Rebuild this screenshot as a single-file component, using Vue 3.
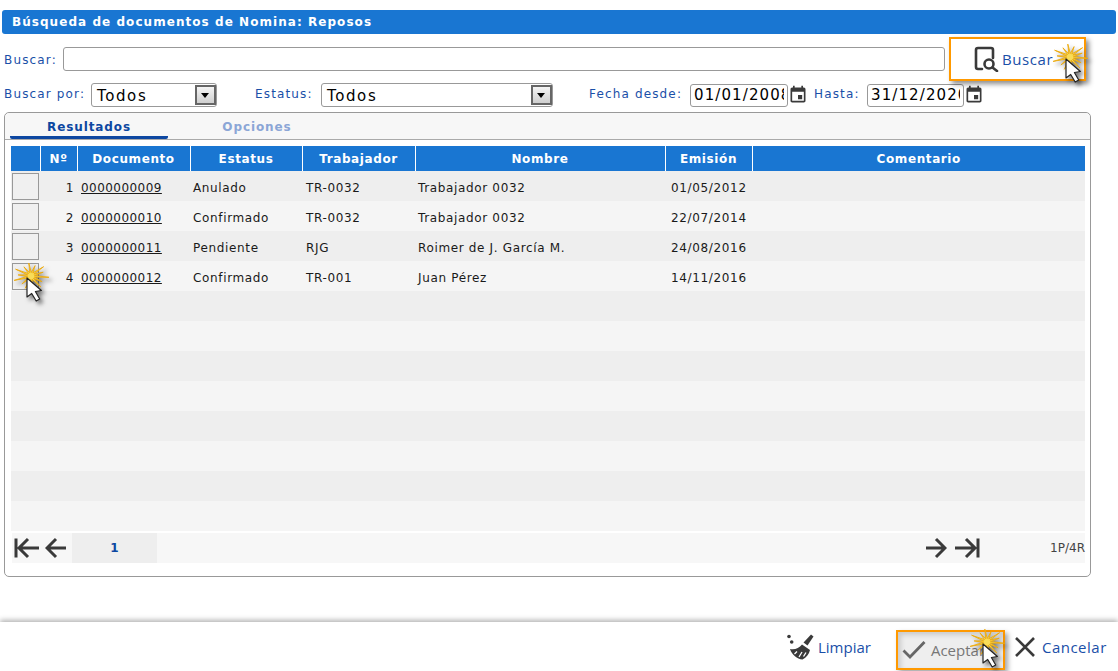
<script setup>
const columns = [
  { title: '', width: 29 },
  { title: 'Nº', width: 37 },
  { title: 'Documento', width: 113 },
  { title: 'Estatus', width: 112 },
  { title: 'Trabajador', width: 113 },
  { title: 'Nombre', width: 250 },
  { title: 'Emisión', width: 87 },
  { title: 'Comentario', width: 333 },
];

const docs = [
  { n: 1, doc: '0000000009', status: 'Anulado', worker: 'TR-0032', name: 'Trabajador 0032', date: '01/05/2012' },
  { n: 2, doc: '0000000010', status: 'Confirmado', worker: 'TR-0032', name: 'Trabajador 0032', date: '22/07/2014' },
  { n: 3, doc: '0000000011', status: 'Pendiente', worker: 'RJG', name: 'Roimer de J. García M.', date: '24/08/2016' },
  { n: 4, doc: '0000000012', status: 'Confirmado', worker: 'TR-001', name: 'Juan Pérez', date: '14/11/2016' },
];

const emptyRows = 8;

// spiky star: long rays sideways, shorter up and down
const burst = [];
for (let i = 0; i < 28; i++) {
  const a = (i / 28) * Math.PI * 2 + 0.1;
  const long = i % 2 === 0;
  const rx = long ? (i % 4 === 0 ? 18 : 13) : 3.5;
  const ry = long ? (i % 4 === 0 ? 13 : 11) : 3.5;
  burst.push((25 + Math.cos(a) * rx).toFixed(1) + ',' + (13 + Math.sin(a) * ry).toFixed(1));
}
const burstPoints = burst.join(' ');
</script>

<template>
  <div class="page">
    <svg class="defs" width="0" height="0">
      <symbol id="spark" viewBox="0 0 42 46" overflow="visible">
        <polygon :points="burstPoints" fill="#f8dc58" stroke="#eba90f" stroke-width="0.9" />
        <path d="M21 15v19l4.700-3.500 4.500 7.500 3.500-2-4.300-7.500 6-1z" fill="#fff" stroke="#222" stroke-width="1.200" stroke-linejoin="round" />
      </symbol>
    </svg>

    <div class="title">Búsqueda de documentos de Nomina: Reposos</div>

    <div class="filters">
      <div class="search-row">
        <label class="lbl lbl-search">Buscar:</label>
        <input class="text-input" type="text" />
        <button class="search-btn">
          <svg width="26" height="26" viewBox="0 0 26 26" fill="none" stroke="#3a3a3a" stroke-width="2.600">
            <path d="M9 23H5a2 2 0 0 1-2-2V4a2 2 0 0 1 2-2h13a2 2 0 0 1 2 2v8" stroke-linecap="round" />
            <circle cx="16" cy="18" r="4.500" />
            <path d="M19.500 21.500L24 25" stroke-linecap="round" />
          </svg>
          <span>Buscar</span>
          <svg class="spark spark-search"><use href="#spark" /></svg>
        </button>
      </div>

      <div class="options-row">
        <label class="lbl lbl-by">Buscar por:</label>
        <div class="select sel-by">
          <span>Todos</span>
          <i class="arrow"></i>
        </div>
        <label class="lbl lbl-status">Estatus:</label>
        <div class="select sel-status">
          <span>Todos</span>
          <i class="arrow"></i>
        </div>
        <label class="lbl lbl-from">Fecha desde:</label>
        <input class="date-input" type="text" value="01/01/2008" />
        <svg class="cal" width="20" height="20" viewBox="0 0 24 24" fill="#3a3a3a">
          <path d="M17 12h-5v5h5v-5zM16 1v2H8V1H6v2H5c-1.110 0-1.990.9-1.990 2L3 19c0 1.100.89 2 2 2h14c1.100 0 2-.9 2-2V5c0-1.100-.9-2-2-2h-1V1h-2zm3 18H5V8h14v11z" />
        </svg>
        <label class="lbl lbl-to">Hasta:</label>
        <input class="date-input date-to" type="text" value="31/12/2020" />
        <svg class="cal" width="20" height="20" viewBox="0 0 24 24" fill="#3a3a3a">
          <path d="M17 12h-5v5h5v-5zM16 1v2H8V1H6v2H5c-1.110 0-1.990.9-1.990 2L3 19c0 1.100.89 2 2 2h14c1.100 0 2-.9 2-2V5c0-1.100-.9-2-2-2h-1V1h-2zm3 18H5V8h14v11z" />
        </svg>
      </div>
    </div>

    <div class="panel">
      <div class="tabs">
        <div class="tab tab-on">Resultados</div>
        <div class="tab">Opciones</div>
      </div>

      <div class="panel-body">
        <table class="grid">
          <colgroup>
            <col v-for="c in columns" :key="c.title" :style="{ width: c.width + 'px' }" />
          </colgroup>
          <thead>
            <tr>
              <th v-for="c in columns" :key="c.title">{{ c.title }}</th>
            </tr>
          </thead>
          <tbody>
            <tr v-for="d in docs" :key="d.n">
              <td class="check-cell">
                <div class="check"></div>
                <svg v-if="d.n === 4" class="spark spark-row"><use href="#spark" /></svg>
              </td>
              <td class="num">{{ d.n }}</td>
              <td class="doc"><a>{{ d.doc }}</a></td>
              <td class="status">{{ d.status }}</td>
              <td class="worker">{{ d.worker }}</td>
              <td class="name">{{ d.name }}</td>
              <td class="date">{{ d.date }}</td>
              <td></td>
            </tr>
            <tr v-for="n in emptyRows" :key="'e' + n">
              <td v-for="c in columns" :key="c.title"></td>
            </tr>
          </tbody>
        </table>

        <div class="pager">
          <svg class="first" width="26" height="24" viewBox="0 0 26 24" fill="none" stroke="#3a3a3a" stroke-width="3">
            <path d="M2 2.500v19M25 12H5M14 3l-9 9 9 9" />
          </svg>
          <svg class="prev" width="22" height="24" viewBox="0 0 22 24" fill="none" stroke="#3a3a3a" stroke-width="3">
            <path d="M21 12H2.500M11 3l-9 9 9 9" />
          </svg>
          <div class="page-num">1</div>
          <svg class="next" width="22" height="24" viewBox="0 0 22 24" fill="none" stroke="#3a3a3a" stroke-width="3">
            <path d="M1 12h18.500M11 3l9 9-9 9" />
          </svg>
          <svg class="last" width="26" height="24" viewBox="0 0 26 24" fill="none" stroke="#3a3a3a" stroke-width="3">
            <path d="M24 2.500v19M1 12h20M12 3l9 9-9 9" />
          </svg>
          <div class="count">1P/4R</div>
        </div>
      </div>
    </div>

    <div class="footer">
      <button class="foot-btn btn-clear">
        <svg width="28" height="26" viewBox="0 0 28 26" fill="#3a3a3a">
          <circle cx="3" cy="2.500" r="1.800" />
          <circle cx="5.700" cy="8" r="1.800" />
          <path d="M25 .5l2.500 2-6 9-4-3z" />
          <path d="M4 15c4.500 1 9-.5 12-4.500l8 5.500c-1 4-3.500 7.500-7.500 9.500C11 25 6 21 4 15z" />
          <path d="M11 17.500l-2.500 2.500M16 18l-3 5M20 18.500l-2.500 4" stroke="#fff" stroke-width="1.300" fill="none" />
        </svg>
        <span>Limpiar</span>
      </button>
      <button class="foot-btn btn-accept">
        <svg width="24" height="20" viewBox="0 0 24 20" fill="none" stroke="#666" stroke-width="2.800">
          <path d="M1.500 10.500l6.500 6.500L22.500 2" />
        </svg>
        <span>Aceptar</span>
        <svg class="spark spark-accept"><use href="#spark" /></svg>
      </button>
      <button class="foot-btn btn-cancel">
        <svg width="22" height="22" viewBox="0 0 22 22" fill="none" stroke="#3a3a3a" stroke-width="2.600">
          <path d="M2 2l18 18M20 2L2 20" />
        </svg>
        <span>Cancelar</span>
      </button>
    </div>
  </div>
</template>

<style>
body {
  background: #fff;
}
</style>

<style scoped>
.page {
  height: 671px;
  width: 1118px;
  display: flex;
  flex-direction: column;
  overflow: hidden;
  font-family: "DejaVu Sans", Verdana, sans-serif;
  font-size: 12px;
  color: #1a1a1a;
}

.defs {
  position: absolute;
}

.title {
  margin: 10px 2px 0;
  height: 24px;
  line-height: 24px;
  padding-left: 10px;
  background: #1976d2;
  border-radius: 3px;
  color: #fff;
  font-weight: bold;
  font-size: 12px;
  letter-spacing: 1.05px;
}

.filters {
  padding: 0 4px;
}

.lbl {
  flex: none;
  color: #1a4fa8;
  font-size: 12px;
  letter-spacing: 1.15px;
  white-space: nowrap;
}

.lbl-search {
  width: 59px;
  padding-top: 2px;
}

.options-row .lbl {
  padding-bottom: 2px;
}

.lbl-by {
  width: 87px;
}

.search-row {
  display: flex;
  align-items: center;
  height: 44px;
  margin-top: 3px;
}

.text-input {
  box-sizing: border-box;
  width: 882px;
  height: 24px;
  border: 1px solid #999;
  border-radius: 3px;
  background: #fff;
  outline: none;
}

.search-btn {
  position: relative;
  box-sizing: border-box;
  display: flex;
  align-items: center;
  gap: 3px;
  width: 137px;
  height: 44px;
  margin-left: 4px;
  padding: 0 0 0 22px;
  background: #fff;
  border: 2px solid #f90;
  box-shadow: 3px 3px 5px rgba(0, 0, 0, 0.45);
  font-family: "Open Sans", sans-serif;
  font-size: 15px;
  letter-spacing: 0.6px;
  color: #1a4fa8;
  cursor: pointer;
}

.spark {
  position: absolute;
  width: 42px;
  height: 46px;
  overflow: visible;
  filter: drop-shadow(3px 3px 2px rgba(0, 0, 0, 0.5));
}

.spark-search {
  left: 94px;
  top: 5px;
}

.options-row {
  display: flex;
  align-items: center;
  height: 24px;
  margin-top: 2px;
}

.select {
  position: relative;
  box-sizing: border-box;
  height: 24px;
  padding-left: 5px;
  line-height: 24px;
  border: 1px solid #999;
  border-radius: 3px;
  background: #fff;
  font-size: 15px;
  letter-spacing: 1.6px;
  color: #000;
}

.sel-by {
  width: 126px;
}

.sel-status {
  width: 232px;
}

.arrow {
  position: absolute;
  right: 0;
  top: 1px;
  width: 21px;
  height: 20px;
  box-sizing: border-box;
  border: 2px solid #666;
  background: linear-gradient(#f4f4f4, #cfcfcf);
}

.arrow::after {
  content: "";
  position: absolute;
  left: 4px;
  top: 6px;
  border: 4.5px solid transparent;
  border-top: 5px solid #000;
  border-bottom: 0;
}

.lbl-status {
  width: 66px;
  margin-left: 38px;
}

.lbl-from {
  width: 101px;
  margin-left: 36px;
}

.lbl-to {
  width: 53px;
  margin-left: 6px;
}

.date-input {
  box-sizing: border-box;
  width: 98px;
  height: 23px;
  padding: 0 3px;
  border: 1px solid #999;
  border-radius: 3px;
  background: #fff;
  font-family: "DejaVu Sans", Verdana, sans-serif;
  font-size: 15px;
  letter-spacing: 1.1px;
  color: #000;
  outline: none;
}

.date-to {
  width: 97px;
}

.cal {
  flex: none;
}

.panel {
  box-sizing: border-box;
  width: 1087px;
  height: 465px;
  margin: 5px 0 0 4px;
  border: 1px solid #999;
  border-radius: 5px;
}

.tabs {
  display: flex;
  gap: 10px;
  height: 26px;
  padding-left: 5px;
  background: #f7f7f7;
  border-bottom: 1px solid #aaa;
  border-radius: 5px 5px 0 0;
}

.tab {
  box-sizing: border-box;
  width: 158px;
  height: 26px;
  line-height: 28px;
  text-align: center;
  font-weight: bold;
  font-size: 12px;
  letter-spacing: 0.9px;
  color: #8ba6d6;
}

.tab-on {
  color: #0d47a1;
  border-bottom: 3px solid #0d47a1;
  border-radius: 0 0 2px 2px;
}

.panel-body {
  padding: 6px 5px 0 6px;
}

.grid {
  table-layout: fixed;
  width: 1074px;
  border-collapse: collapse;
}

.grid th {
  height: 25px;
  padding: 0;
  background: #1976d2;
  border-right: 1px solid #fff;
  color: #fff;
  font-size: 12px;
  font-weight: bold;
  letter-spacing: 0.6px;
}

.grid th:last-child {
  border-right: 0;
}

.grid td {
  box-sizing: border-box;
  height: 30px;
  padding: 4px 0 0;
  font-size: 12px;
  letter-spacing: 0.65px;
  color: #1a1a1a;
  white-space: nowrap;
}

.grid tbody tr:nth-child(odd) {
  background: #eeeeee;
}

.grid tbody tr:nth-child(even) {
  background: #f5f5f5;
}

.grid td.check-cell {
  position: relative;
  padding: 0;
}

.check {
  box-sizing: border-box;
  width: 27px;
  height: 27px;
  margin-left: 1px;
  border: 1px solid #999;
  background: #f0f0f0;
}

.spark-row {
  left: -5px;
  top: 2px;
}

.grid td.num {
  text-align: right;
  padding-right: 3px;
}

.grid td.doc {
  padding-left: 4px;
  letter-spacing: 0.45px;
}

.doc a {
  color: #1a1a1a;
  text-decoration: underline;
}

.grid td.status {
  padding-left: 3px;
}

.grid td.worker {
  padding-left: 4px;
}

.grid td.name {
  padding-left: 3px;
}

.grid td.date {
  padding-left: 6px;
}

.pager {
  display: flex;
  align-items: center;
  height: 30px;
  margin: 2px 0 0 1px;
  background: #f7f7f7;
}

.pager svg {
  flex: none;
}

.first {
  margin-left: 2px;
}

.prev {
  margin-left: 5px;
}

.page-num {
  width: 85px;
  height: 30px;
  line-height: 30px;
  margin-left: 5px;
  text-align: center;
  background: #eeeeee;
  color: #0d47a1;
  font-size: 12px;
  font-weight: bold;
}

.next {
  margin-left: auto;
}

.last {
  margin-left: 7px;
}

.count {
  width: 105px;
  text-align: right;
  font-size: 12px;
  color: #444;
}

.footer {
  display: flex;
  align-items: center;
  box-sizing: border-box;
  height: 49px;
  margin-top: auto;
  padding-left: 786px;
  background: #fff;
  box-shadow: 0 -2px 5px rgba(0, 0, 0, 0.3);
}

.foot-btn {
  position: relative;
  display: flex;
  align-items: center;
  padding: 0;
  border: 0;
  background: none;
  font-family: "Open Sans", sans-serif;
  font-size: 15px;
  color: #1a4fa8;
  cursor: pointer;
}

.btn-clear {
  gap: 4px;
}

.btn-accept {
  box-sizing: border-box;
  width: 109px;
  height: 40px;
  margin: 7px 0 0 25px;
  padding-left: 4px;
  gap: 5px;
  border: 2px solid #f90;
  background: #eeeeee;
  color: #777;
  overflow: visible;
  box-shadow: inset 3px 3px 5px rgba(0, 0, 0, 0.15), 3px 3px 5px rgba(0, 0, 0, 0.35);
}

.spark-accept {
  left: 64px;
  top: -3px;
}

.btn-cancel {
  margin-left: 9px;
  gap: 6px;
  letter-spacing: 0.5px;
}
</style>
